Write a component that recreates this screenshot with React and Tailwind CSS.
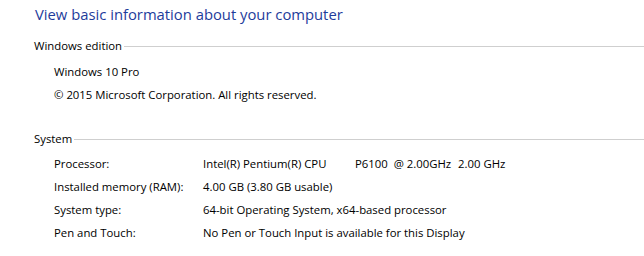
export default function App() {
  const rows = [
    ["Processor:", null],
    ["Installed memory (RAM):", "4.00 GB (3.80 GB usable)"],
    ["System type:", "64-bit Operating System, x64-based processor"],
    ["Pen and Touch:", "No Pen or Touch Input is available for this Display"],
  ];
  return (
    <div className="w-[644px] h-[256px] bg-white overflow-hidden text-black text-[11.35px] leading-[16px]" style={{ fontFamily: '"Open Sans", "Noto Sans", sans-serif' }}>
      <div className="pl-[35px] pt-[3px] text-[14.8px] leading-[22px] text-[#1e3c9b]">View basic information about your computer</div>
      <div className="flex items-center pl-[34px] mt-[13px]">
        <span>Windows edition</span>
        <div className="flex-1 h-px bg-[#cfcfcf] ml-[2px]" />
      </div>
      <div className="pl-[54px] mt-[10px]">Windows 10 Pro</div>
      <div className="pl-[54px] mt-[7px]">© 2015 Microsoft Corporation. All rights reserved.</div>
      <div className="flex items-center pl-[34px] mt-[28px]">
        <span>System</span>
        <div className="flex-1 h-px bg-[#cfcfcf] ml-[2px]" />
      </div>
      <div className="flex flex-col gap-[7px] mt-[9px] pl-[54px]">
        {rows.map(([k, v]) => (
          <div key={k} className="flex">
            <div className="w-[149px] shrink-0">{k}</div>
            {v ? (
              <div>{v}</div>
            ) : (
              <div className="flex">
                <span className="w-[152px]">Intel(R) Pentium(R) CPU</span>
                <span className="w-[103px]">P6100&nbsp;&nbsp;@ 2.00GHz</span>
                <span>2.00 GHz</span>
              </div>
            )}
          </div>
        ))}
      </div>
    </div>
  );
}
